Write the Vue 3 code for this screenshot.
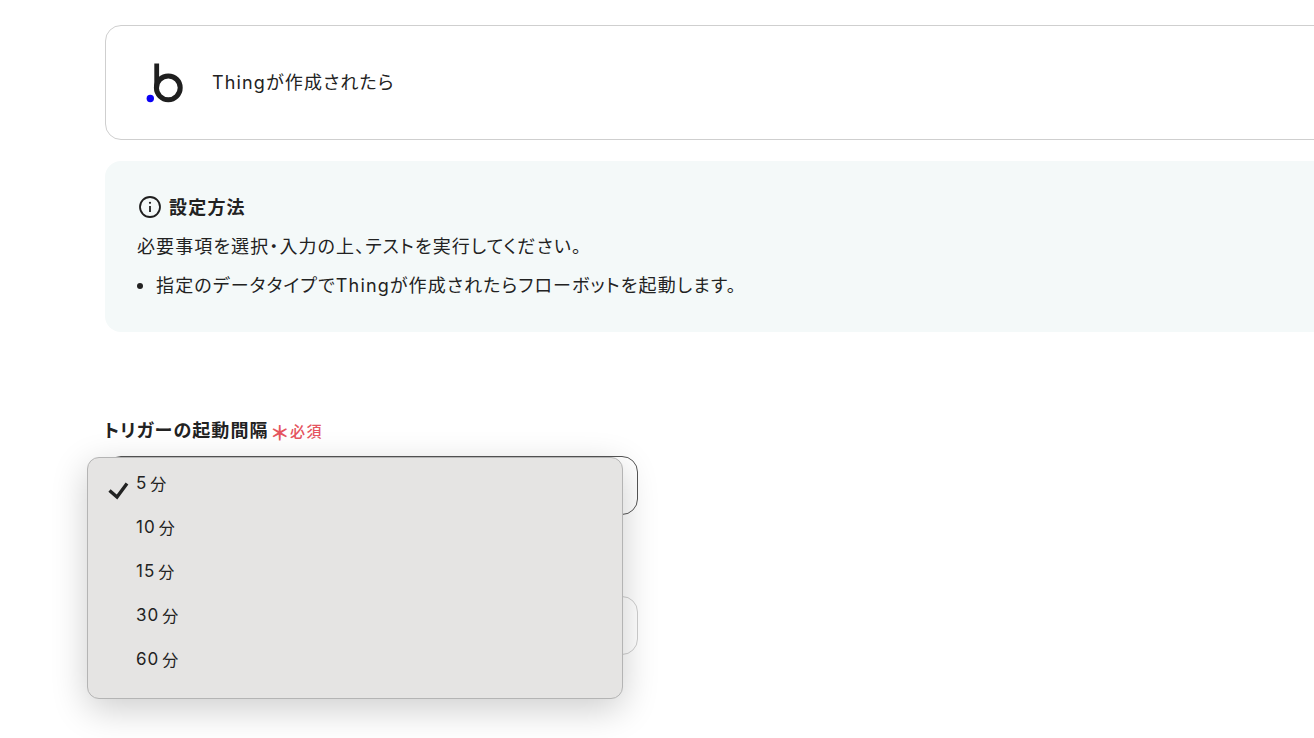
<template>
  <div class="page">
    <div class="app-card">
      <svg class="logo" width="38" height="40" viewBox="0 0 38 40">
        <path d="M10.7 0.5V25" fill="none" stroke="#1f1f1f" stroke-width="4.8" />
        <circle cx="22.3" cy="24.8" r="11.9" fill="none" stroke="#1f1f1f" stroke-width="5" />
        <circle cx="4.3" cy="35.5" r="3.7" fill="#0a00f5" />
      </svg>
      <span class="app-card-text">Thingが作成されたら</span>
    </div>

    <div class="info-box">
      <div class="info-title">
        <svg width="24" height="24" viewBox="0 0 24 24" fill="none" stroke="#1f1f1f">
          <circle cx="12" cy="12" r="10" stroke-width="1.8" />
          <path d="M12 11v6" stroke-width="1.8" />
          <circle cx="12" cy="7.8" r="1.1" fill="#1f1f1f" stroke="none" />
        </svg>
        <span class="info-title-text">設定方法</span>
      </div>
      <p class="info-text">必要事項を選択・入力の上、テストを実行してください。</p>
      <ul class="info-list">
        <li>指定のデータタイプでThingが作成されたらフローボットを起動します。</li>
      </ul>
    </div>

    <div class="field">
      <div class="field-label">
        <span class="field-label-text">トリガーの起動間隔</span>
        <span class="asterisk">＊</span>
        <span class="required">必須</span>
      </div>
      <div class="select-wrap">
        <div class="select select--open"></div>
        <div class="menu">
          <div v-for="option in options" :key="option" class="menu-item">
            <svg v-if="option === 5" class="check" width="22" height="22" viewBox="0 0 22 22">
              <path d="M2.5 11.5l7.5 6.5L20 4.5" fill="none" stroke="#222" stroke-width="3.4" />
            </svg>
            <span class="menu-num">{{ option }}</span><span class="menu-unit">分</span>
          </div>
        </div>
      </div>
      <div class="select select--second"></div>
    </div>
  </div>
</template>

<script setup>
const options = [5, 10, 15, 30, 60]
</script>

<style>
html,
body {
  margin: 0;
  overflow: hidden;
  background: #fff;
}
</style>

<style scoped>
.page {
  width: 1314px;
  height: 738px;
  box-sizing: border-box;
  padding: 25px 0 0 105px;
  overflow: hidden;
  font-family: Inter, "Noto Sans CJK JP", sans-serif;
  font-feature-settings: "palt";
  color: #222;
}

.app-card {
  display: flex;
  align-items: center;
  gap: 28px;
  width: 1300px;
  height: 115px;
  box-sizing: border-box;
  padding-left: 40px;
  border: 1px solid #cfcfcf;
  border-radius: 16px;
}

.logo {
  flex-shrink: 0;
}

.app-card-text {
  padding-bottom: 3px;
  font-size: 18px;
  letter-spacing: 1.15px;
}

.info-box {
  width: 1300px;
  height: 171px;
  box-sizing: border-box;
  margin-top: 21px;
  padding: 33px 32px 0;
  background: #f4f9f9;
  border-radius: 16px;
}

.info-title {
  display: flex;
  align-items: center;
  gap: 7px;
  height: 26px;
  margin-left: 1px;
  font-size: 18px;
  font-weight: 700;
  letter-spacing: 1.2px;
}

.info-title-text {
  padding-bottom: 2px;
}

.info-text {
  margin: 14px 0 0;
  font-size: 18px;
  line-height: 26px;
  letter-spacing: 1.1px;
}

.info-list {
  margin: 13px 0 0;
  padding-left: 19px;
  font-size: 18px;
  line-height: 26px;
  letter-spacing: 1.14px;
}

.info-list li::marker {
  font-size: 19px;
}

.field {
  margin-top: 86px;
}

.field-label {
  display: flex;
  align-items: center;
  height: 24px;
  margin-left: -1px;
  font-size: 18px;
  font-weight: 700;
  letter-spacing: 1.1px;
}

.field-label-text {
  padding-bottom: 3px;
}

.asterisk {
  margin-left: 3px;
  color: #e5555f;
  font-size: 20px;
  font-weight: 700;
  letter-spacing: 0;
  line-height: 24px;
  padding-top: 8px;
}

.required {
  margin-left: 2px;
  color: #e5555f;
  font-size: 15px;
  font-weight: 500;
  letter-spacing: 1.5px;
}

.select-wrap {
  position: relative;
  margin-top: 14px;
}

.select {
  width: 533px;
  height: 59px;
  box-sizing: border-box;
  border-radius: 16px;
}

.select--open {
  border: 1px solid #555;
}

.select--second {
  margin-top: 81px;
  border: 1px solid #cfcfcf;
}

.menu {
  position: absolute;
  top: 1px;
  left: -18px;
  width: 536px;
  height: 242px;
  box-sizing: border-box;
  padding-top: 4px;
  background: #e5e4e3;
  border: 1px solid #b4b4b4;
  border-radius: 12px;
  box-shadow: 0 10px 36px rgba(0, 0, 0, 0.2);
}

.menu-item {
  position: relative;
  display: flex;
  align-items: center;
  height: 44px;
  padding-left: 48px;
  box-sizing: border-box;
  padding-bottom: 3px;
  font-size: 16px;
  letter-spacing: 0.4px;
}

.menu-num {
  font-size: 17px;
  letter-spacing: 1px;
}

.menu-unit {
  margin-left: 3px;
}

.check {
  position: absolute;
  left: 19px;
  top: 17px;
}
</style>
